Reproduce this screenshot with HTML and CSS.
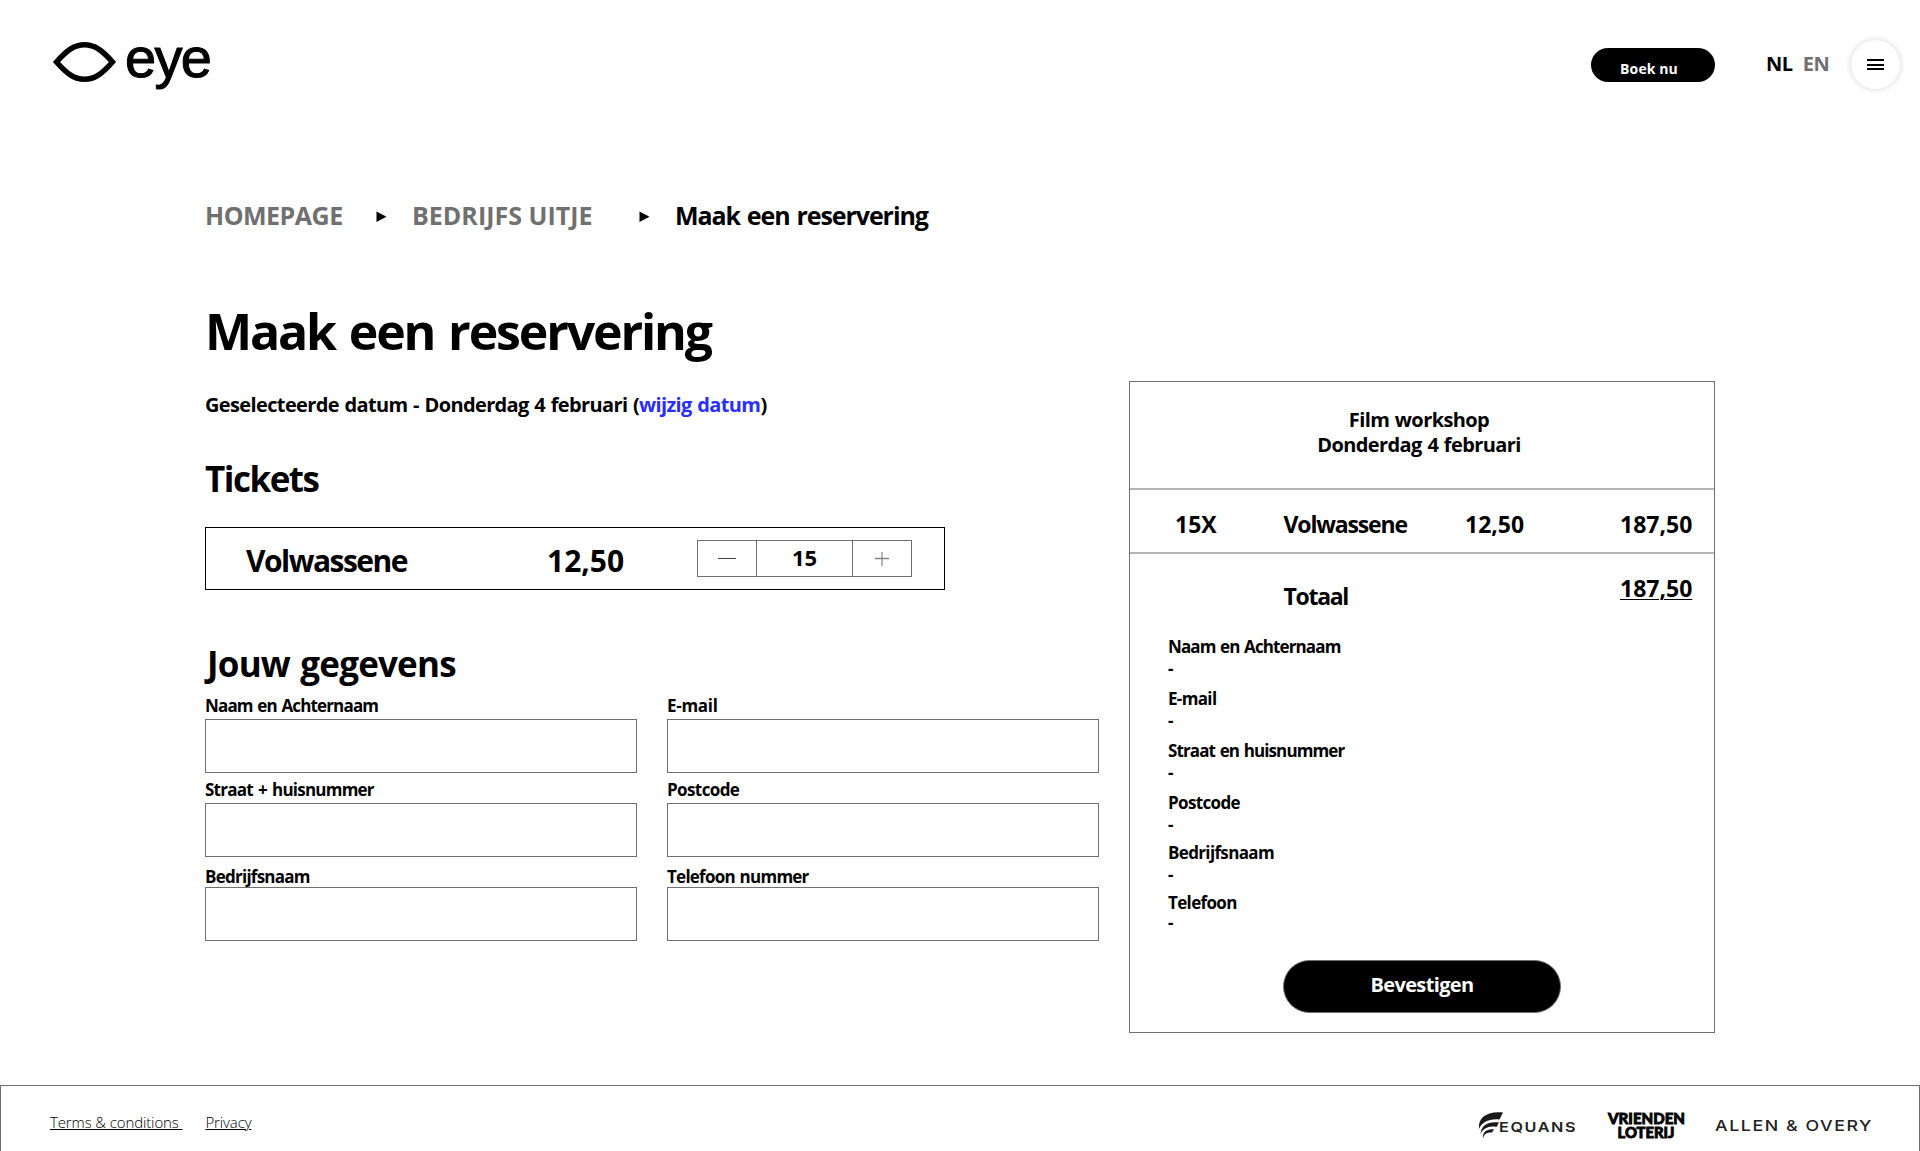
FILE: index.html
```
<!DOCTYPE html>
<html lang="nl">
<head>
<meta charset="utf-8">
<title>Eye - Maak een reservering</title>
<link rel="stylesheet" href="styles.css">
</head>
<body>
<div class="page">
  <header class="header">
    <svg class="logo" width="170" height="80" viewBox="50 20 170 80" role="img" aria-label="eye">
      <path d="M57.500 62C68 50 75.500 44.700 85.500 44.700S103 50 113.500 62C103 74 95.500 79.300 85.500 79.300S68 74 57.500 62Z" fill="none" stroke="#000" stroke-width="5.400"/>
      <text class="logo-text" x="126" y="77">eye</text>
    </svg>
    <div class="header-actions">
      <button class="book">Boek nu</button>
      <nav class="languages"><span class="active">NL</span><span>EN</span></nav>
      <button class="menu" aria-label="Menu"><i></i><i></i><i></i></button>
    </div>
  </header>

  <nav class="breadcrumb">
    <a class="home">HOMEPAGE</a>
    <svg class="arrow" width="11" height="12" viewBox="0 0 11 12"><path d="M.5.500 10.500 5.800.500 11Z"/></svg>
    <a class="outing">BEDRIJFS UITJE</a>
    <svg class="arrow" width="11" height="12" viewBox="0 0 11 12"><path d="M.5.500 10.500 5.800.500 11Z"/></svg>
    <span class="current">Maak een reservering</span>
  </nav>

  <main class="content">
    <section class="booking">
      <h1>Maak een reservering</h1>
      <p class="date">Geselecteerde datum - Donderdag 4 februari (<a>wijzig datum</a>)</p>
      <h2 class="tickets-title">Tickets</h2>
      <div class="ticket">
        <span class="ticket-name">Volwassene</span>
        <span class="ticket-price">12,50</span>
        <div class="stepper">
          <span class="step"><svg width="18" height="14" viewBox="0 0 18 14"><path d="M0 6.500H18" stroke="#444"/></svg></span>
          <span class="amount">15</span>
          <span class="step"><svg width="14" height="14" viewBox="0 0 14 14"><path d="M7 0V14" stroke="#b5b5b5" stroke-width="2"/><path d="M0 6.500H14" stroke="#858585" stroke-width="1.500"/></svg></span>
        </div>
      </div>
      <h2 class="details-title">Jouw gegevens</h2>
      <form class="form">
        <label>Naam en Achternaam<input type="text"></label>
        <label class="mail">E-mail<input type="text"></label>
        <label class="street">Straat + huisnummer<input type="text"></label>
        <label class="postcode">Postcode<input type="text"></label>
        <label class="low">Bedrijfsnaam<input type="text"></label>
        <label class="low">Telefoon nummer<input type="text"></label>
      </form>
    </section>

    <aside class="summary">
      <div class="summary-head">Film workshop<br>Donderdag 4 februari</div>
      <div class="line">
        <span>15X</span><span class="name">Volwassene</span><span>12,50</span><span>187,50</span>
      </div>
      <div class="line total">
        <span></span><span class="total-label">Totaal</span><span></span><span class="sum">187,50</span>
      </div>
      <dl class="details">
        <div><dt>Naam en Achternaam</dt><dd>-</dd></div>
        <div class="short"><dt>E-mail</dt><dd>-</dd></div>
        <div><dt>Straat en huisnummer</dt><dd>-</dd></div>
        <div class="tight short"><dt>Postcode</dt><dd>-</dd></div>
        <div class="tight short"><dt>Bedrijfsnaam</dt><dd>-</dd></div>
        <div class="tight short last"><dt>Telefoon</dt><dd>-</dd></div>
      </dl>
      <button class="confirm">Bevestigen</button>
    </aside>
  </main>

  <footer class="footer">
    <nav class="legal"><a>Terms &amp; conditions </a><a class="privacy">Privacy</a></nav>
    <svg class="sponsors" width="400" height="36" viewBox="1475 1107 400 36">
      <g fill="#1a1a1a">
        <path d="M1478 1129C1477 1118 1485 1111 1502 1112.500L1498.500 1119.500C1488 1118.500 1481 1122 1478 1129Z"/>
        <path d="M1479.500 1134C1480 1125.500 1487 1121 1498 1122.500L1495.500 1127C1488 1125.500 1482 1128.500 1479.500 1134Z"/>
        <path d="M1482 1138.500C1481 1132.500 1486 1128.500 1493 1129.500L1491 1132.500C1486 1132 1483 1134 1482 1138.500Z"/>
      </g>
      <text class="equans" x="1498" y="1132.300" textLength="78" lengthAdjust="spacingAndGlyphs">EQUANS</text>
      <text class="lottery" x="1607" y="1123.500" textLength="77" lengthAdjust="spacingAndGlyphs">VRIENDEN</text>
      <text class="lottery" x="1616.500" y="1137.500" textLength="57" lengthAdjust="spacingAndGlyphs">LOTERIJ</text>
      <text class="allen" x="1714" y="1131" textLength="158" lengthAdjust="spacingAndGlyphs">ALLEN &amp; OVERY</text>
    </svg>
  </footer>
</div>
</body>
</html>
```
FILE: styles.css
```
* { box-sizing: border-box; }
body {
  margin: 0;
  background: #fff;
  color: #000;
  font-family: "Open Sans", "Noto Sans", sans-serif;
  font-weight: 700;
}
h1, h2, p, dl, dd { margin: 0; }
button { border: 0; font: inherit; padding: 0; }
.page {
  width: 1920px;
  height: 1151px;
  overflow: hidden;
  display: flex;
  flex-direction: column;
}

.header {
  height: 198px;
  padding: 20px 20px 0 50px;
  display: flex;
  justify-content: space-between;
  align-items: flex-start;
}
.logo { margin-left: -1px; }
.logo-text {
  font: 400 56px "Liberation Sans", sans-serif;
  letter-spacing: -1.7px;
  stroke: #000;
  stroke-width: 1px;
}
.header-actions { display: flex; align-items: center; height: 89px; }
.book {
  width: 124px;
  height: 34px;
  padding: 7px 8px 0 0;
  border-radius: 17px;
  background: #000;
  color: #fff;
  font-size: 14px;
  line-height: 27px;
  letter-spacing: .1px;
}
.languages {
  width: 136px;
  padding: 0 0 2px 51px;
  display: flex;
  gap: 10px;
  font-size: 20px;
  line-height: 26px;
  letter-spacing: -.4px;
  color: #707070;
}
.languages .active { color: #000; }
.menu {
  width: 49px;
  height: 49px;
  border-radius: 50%;
  background: #fff;
  box-shadow: 0 0 6px rgba(0, 0, 0, .18);
  display: flex;
  flex-direction: column;
  align-items: center;
  justify-content: center;
  gap: 2.5px;
}
.menu i { width: 17px; height: 2px; background: #000; }

.breadcrumb {
  height: 34px;
  padding-left: 205px;
  display: grid;
  grid-template-columns: 171px 36px 227px 36px auto;
  align-items: center;
  font-size: 25px;
  line-height: 34px;
  color: #707070;
}
.breadcrumb .home { letter-spacing: -.5px; }
.breadcrumb .outing { letter-spacing: .02px; }
.breadcrumb .current { color: #000; letter-spacing: -1.08px; word-spacing: 1.5px; }
.arrow { margin: 4px 0 0 0; fill: #000; }

.content {
  height: 853px;
  padding: 69px 0 0 205px;
  display: grid;
  grid-template-columns: 894px 586px;
  column-gap: 30px;
  align-items: start;
}
h1 {
  font-size: 50px;
  line-height: 60px;
  letter-spacing: -2.15px;
  word-spacing: 3px;
}
.date {
  margin-top: 31px;
  font-size: 20px;
  line-height: 26px;
  letter-spacing: -.63px;
  word-spacing: 1px;
}
.date a { color: #2a2eff; }
h2 { font-size: 35px; line-height: 44px; }
.tickets-title { margin-top: 39px; letter-spacing: -1.5px; }
.ticket {
  width: 740px;
  height: 63px;
  margin-top: 26px;
  padding: 12px 32px 0 40px;
  border: 1px solid #000;
  display: flex;
  align-items: flex-start;
  font-size: 30px;
  line-height: 42px;
}
.ticket-name { width: 301px; letter-spacing: -1.5px; }
.ticket-price { flex: 1; }
.stepper {
  width: 215px;
  height: 37px;
  border: 1px solid #707070;
  display: grid;
  grid-template-columns: 58px 1fr 58px;
}
.step { display: flex; align-items: center; justify-content: center; }
.amount {
  border: solid #707070;
  border-width: 0 1px;
  font-size: 22px;
  line-height: 33px;
  text-align: center;
}
.details-title { margin-top: 52px; padding-left: 2px; letter-spacing: -.8px; word-spacing: 2px; }
.form {
  margin-top: 7px;
  display: grid;
  grid-template-columns: 432px 432px;
  gap: 4px 30px;
}
.form label {
  height: 80px;
  display: flex;
  flex-direction: column;
  justify-content: flex-end;
  font-size: 17px;
  line-height: 26px;
  letter-spacing: -.84px;
  word-spacing: 1px;
}
.form .mail { letter-spacing: -.3px; }
.form .street { letter-spacing: -.77px; word-spacing: 1.5px; }
.form .postcode { letter-spacing: -.6px; }
.form .low { line-height: 31px; justify-content: flex-start; letter-spacing: -.75px; }
.form .low input { margin-top: -5px; }
.form input {
  width: 432px;
  height: 54px;
  flex: none;
  border: 1px solid #707070;
  background: transparent;
}

.summary {
  height: 652px;
  margin-top: 80px;
  border: 1px solid #707070;
  display: flex;
  flex-direction: column;
}
.summary-head {
  height: 108px;
  padding: 25px 6px 0 0;
  border-bottom: 2px solid #b5b5b5;
  text-align: center;
  font-size: 20px;
  line-height: 25px;
  letter-spacing: -.6px;
  word-spacing: 1px;
}
.line {
  height: 64px;
  padding: 18px 0 0 45px;
  border-bottom: 2px solid #b5b5b5;
  display: grid;
  grid-template-columns: 108.5px 181.5px 155px auto;
  font-size: 23px;
  line-height: 32px;
}
.line .name { letter-spacing: -1.15px; }
.total { height: 82px; border: 0; }
.total-label { padding-top: 8px; letter-spacing: -1.3px; }
.sum { text-decoration: underline; text-decoration-thickness: 1px; text-underline-offset: 2px; }
.details {
  padding-left: 38px;
  font-size: 17px;
  line-height: 22px;
  letter-spacing: -.88px;
  word-spacing: 1px;
}
.details div { height: 52px; }
.details .tight { height: 50px; }
.details .short { letter-spacing: -.65px; }
.details .last dd { line-height: 18px; }
.confirm {
  width: 278px;
  height: 53px;
  margin: 18px auto 0;
  padding-bottom: 3px;
  border: 1px solid #707070;
  border-radius: 27px;
  background: #000;
  color: #fff;
  font-size: 20px;
  line-height: 48px;
  letter-spacing: -.64px;
}

.footer {
  height: 66px;
  padding: 21px 43px 0 49px;
  border: 1px solid #707070;
  border-bottom: 0;
  display: flex;
  justify-content: space-between;
  align-items: flex-start;
}
.legal {
  padding-top: 5px;
  display: flex;
  font-size: 15px;
  line-height: 20px;
  font-weight: 300;
  letter-spacing: -.12px;
  white-space: pre;
}
.legal a { text-decoration: underline; text-underline-offset: 1px; text-decoration-thickness: 1px; }
.legal .privacy { margin-left: 23px; }
.equans { font: 600 13.500px Inter, sans-serif; letter-spacing: 1.3px; fill: #222; }
.lottery { font: 900 14.500px Lato, sans-serif; stroke: #000; stroke-width: .8px; }
.allen { font: 500 15px Inter, sans-serif; letter-spacing: 1.3px; fill: #222; }
```
